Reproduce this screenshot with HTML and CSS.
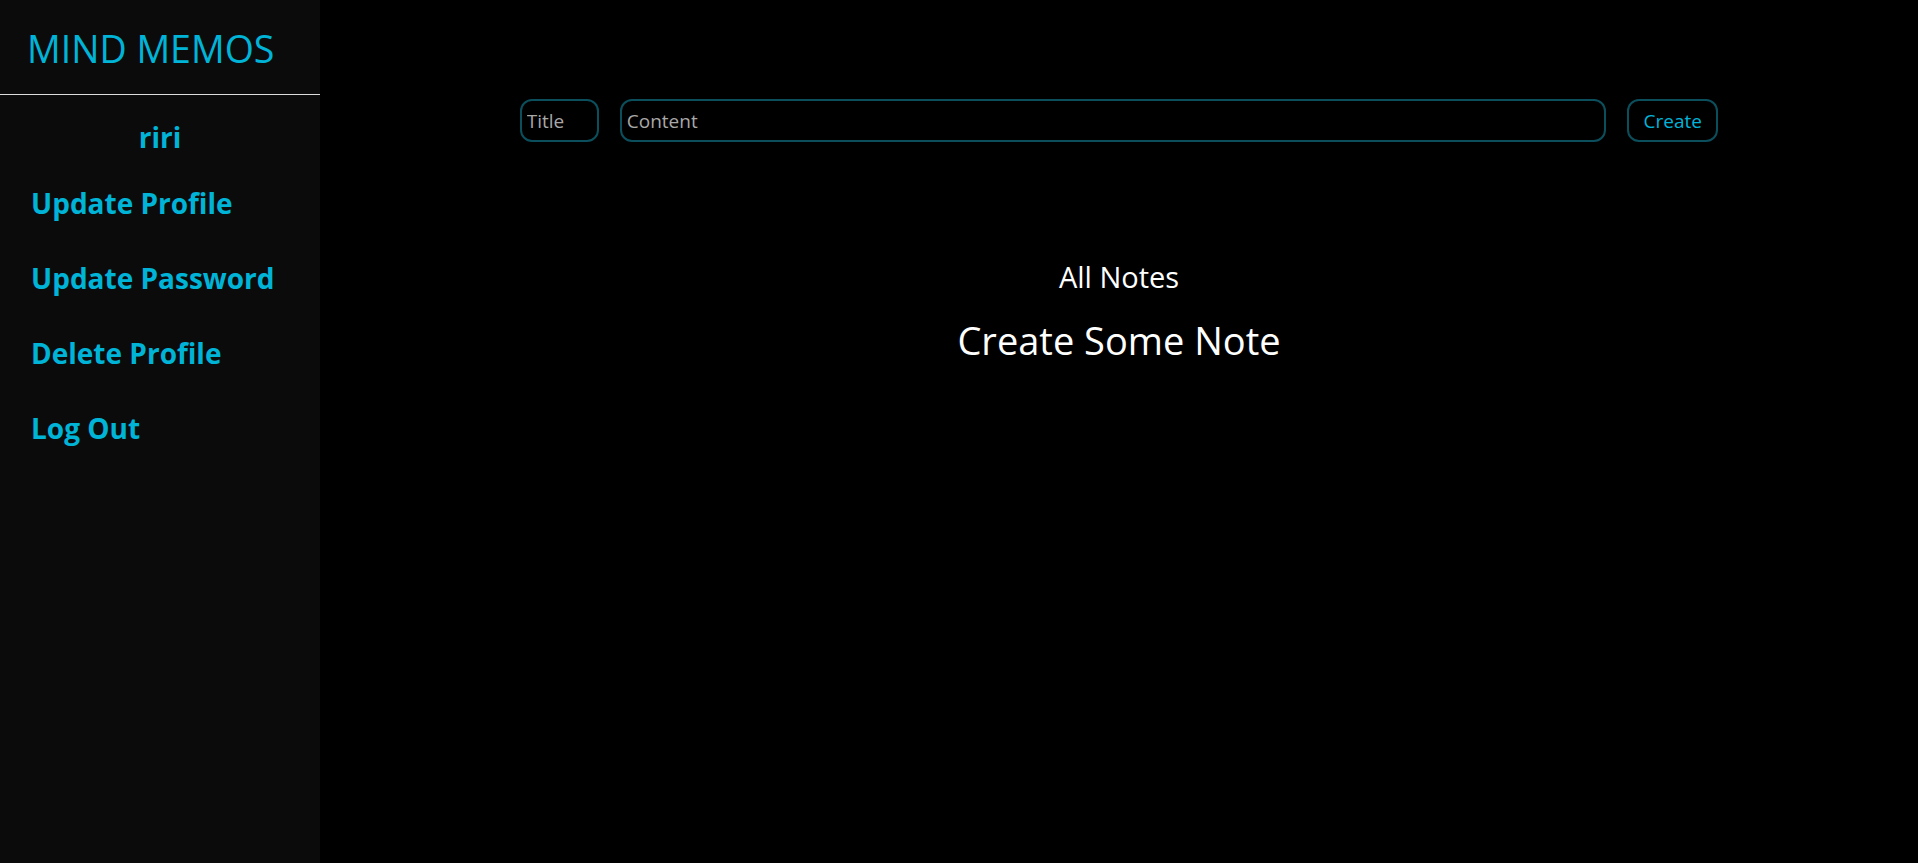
FILE: index.html
```html
<!DOCTYPE html>
<html lang="en">
<head>
<meta charset="utf-8">
<title>Mind Memos</title>
<link rel="stylesheet" href="styles.css">
</head>
<body>
<div class="app">
  <aside class="sidebar">
    <h1 class="brand">MIND MEMOS</h1>
    <hr class="divider">
    <h2 class="user">riri</h2>
    <nav class="menu">
      <a class="menu-item" href="#">Update Profile</a>
      <a class="menu-item" href="#">Update Password</a>
      <a class="menu-item" href="#">Delete Profile</a>
      <a class="menu-item" href="#">Log Out</a>
    </nav>
  </aside>
  <main class="main">
    <form class="note-form">
      <input class="field field-title" type="text" placeholder="Title">
      <input class="field field-content" type="text" placeholder="Content">
      <button class="btn-create" type="button">Create</button>
    </form>
    <h3 class="section-title">All Notes</h3>
    <h2 class="empty">Create Some Note</h2>
  </main>
</div>
</body>
</html>
```
FILE: styles.css
```css
* { box-sizing: border-box; }
html, body { margin: 0; padding: 0; height: 100%; }
body {
  background: #000;
  font-family: "Open Sans", "Noto Sans", sans-serif;
  color: #fff;
}
.app {
  display: flex;
  height: 100vh;
}
.sidebar {
  width: 320px;
  flex: none;
  background: #0b0b0b;
  display: flex;
  flex-direction: column;
}
.brand {
  margin: 0;
  height: 94px;
  padding: 26px 0 0 27px;
  font-size: 37.5px;
  font-weight: 400;
  color: #00b4d8;
  line-height: 1.2;
}
.divider {
  margin: 0;
  border: none;
  height: 1px;
  background: #ddd;
}
.user {
  margin: 26px 0 0;
  text-align: center;
  font-size: 28px;
  font-weight: 700;
  color: #00b4d8;
  line-height: 1.2;
}
.menu {
  display: flex;
  flex-direction: column;
  padding: 0 0 0 31px;
  margin-top: 29px;
  gap: 36px;
}
.menu-item {
  color: #00b4d8;
  text-decoration: none;
  font-size: 28px;
  font-weight: 700;
  line-height: 39px;
}
.main {
  flex: 1;
  display: flex;
  flex-direction: column;
  align-items: center;
  padding-top: 99px;
}
.note-form {
  width: 75%;
  display: flex;
  gap: 21px;
}
.field, .btn-create {
  height: 43px;
  border: 2px solid #0b4f5c;
  border-radius: 12px;
  background: #000;
  font-family: inherit;
  font-size: 19px;
  padding: 0 5px;
  outline: none;
}
.field { color: #ccc; }
.field::placeholder { color: #a8a8a8; }
.field-title { width: 79px; }
.field-content { flex: 1; }
.btn-create {
  width: 91px;
  color: #00b4d8;
  padding: 0;
}
.section-title {
  margin: 118px 0 0;
  font-size: 29px;
  font-weight: 400;
  line-height: 1.2;
}
.empty {
  margin: 23px 0 0;
  font-size: 38px;
  font-weight: 400;
  line-height: 1.2;
}
```
